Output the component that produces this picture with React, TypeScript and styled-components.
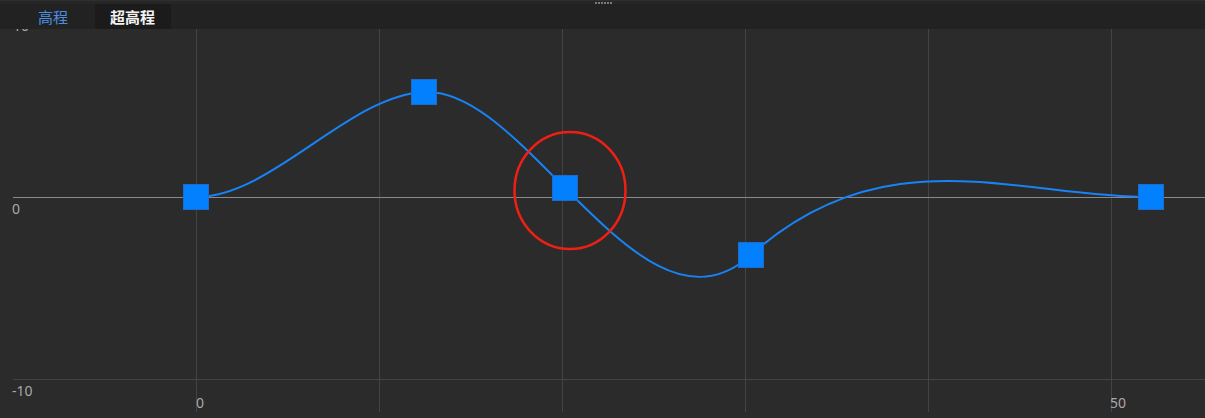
import React from "react";
import styled, { createGlobalStyle } from "styled-components";

const GlobalStyle = createGlobalStyle`
  html, body { margin: 0; padding: 0; background: #2b2b2b; }
  body { font-family: "Noto Sans CJK SC", "Noto Sans", sans-serif; }
`;

const Panel = styled.div`
  width: 1205px;
  height: 418px;
  display: flex;
  flex-direction: column;
  background: #2b2b2b;
  overflow: hidden;
`;

const TopStrip = styled.div`
  height: 4px;
  background: #262626;
  border-top: 1px solid #2f2f2f;
  box-sizing: border-box;
  display: flex;
  justify-content: center;
  align-items: flex-start;
  padding-left: 2px;
`;

const Grip = styled.div`
  display: flex;
  gap: 1px;
  margin-top: 1px;
`;

const GripDot = styled.span`
  width: 2px;
  height: 2px;
  background: #7a7a7a;
`;

const TabBar = styled.div`
  height: 25px;
  background: #222222;
  display: flex;
  align-items: stretch;
  padding-left: 20px;
`;

const Tab = styled.div<{ $active?: boolean }>`
  display: flex;
  align-items: center;
  padding: 0 ${(p) => (p.$active ? "15px" : "16px")} 0 ${(p) => (p.$active ? "18px" : "15px")};
  font-size: 15px;
  line-height: 1;
  color: ${(p) => (p.$active ? "#4b8fe2" : "#f2f2f2")};
  background: ${(p) => (p.$active ? "transparent" : "#1b1b1b")};
  font-weight: ${(p) => (p.$active ? 400 : 700)};
  margin-right: ${(p) => (p.$active ? "12px" : "0")};
`;

const ChartArea = styled.div`
  flex: 1;
  overflow: hidden;
`;

const Svg = styled.svg`
  display: block;
`;

const TOP = 29;
// x, y (page px), slope dy/dx at the point
const pts: [number, number, number][] = [
  [196, 197, 0],
  [424, 92, -0.05],
  [565, 188, 1.0],
  [751, 255, -0.9],
  [1151, 197, 0],
];

function hermitePath(p: [number, number, number][]): string {
  let d = `M${p[0][0]},${p[0][1] - TOP}`;
  for (let i = 0; i < p.length - 1; i++) {
    const [x0, y0, m0] = p[i];
    const [x1, y1, m1] = p[i + 1];
    const h = (x1 - x0) / 3;
    d += ` C${x0 + h},${y0 - TOP + m0 * h} ${x1 - h},${y1 - TOP - m1 * h} ${x1},${y1 - TOP}`;
  }
  return d;
}

const vLines = [196, 379, 562, 745, 928, 1111];
const hLines = [
  { y: 15, color: "#444" },
  { y: 197, color: "#8a8a8a" },
  { y: 379, color: "#444" },
];

export default function App() {
  const curve = hermitePath(pts);
  return (
    <>
      <GlobalStyle />
      <Panel>
        <TopStrip>
          <Grip>
            {Array.from({ length: 6 }).map((_, i) => (
              <GripDot key={i} />
            ))}
          </Grip>
        </TopStrip>
        <TabBar>
          <Tab $active>高程</Tab>
          <Tab>超高程</Tab>
        </TabBar>
        <ChartArea>
          <Svg width={1205} height={389} viewBox="0 0 1205 389">
            {vLines.map((x) => (
              <line key={x} x1={x + 0.5} x2={x + 0.5} y1={0} y2={383} stroke="#444" strokeWidth={1} />
            ))}
            {hLines.map((l) => (
              <line key={l.y} x1={13} x2={1205} y1={l.y - TOP + 0.5} y2={l.y - TOP + 0.5} stroke={l.color} strokeWidth={1} />
            ))}
            <g fontFamily="'Noto Sans', 'DejaVu Sans', sans-serif" fontSize={14} fill="#a9a9a9">
              <text x={13} y={15 - TOP + 16}>10</text>
              <text x={12} y={197 - TOP + 17}>0</text>
              <text x={12} y={379 - TOP + 17}>-10</text>
              <text x={196} y={408 - TOP}>0</text>
              <text x={1110} y={408 - TOP}>50</text>
            </g>
            <path d={curve} fill="none" stroke="#1783f5" strokeWidth={2} />
            {pts.map(([x, y]) => (
              <rect
                key={x}
                x={x - 12.5}
                y={y - TOP - 12.5}
                width={25}
                height={25}
                fill="#0380fe"
                stroke="#1d6cc9"
                strokeWidth={1}
              />
            ))}
            <ellipse cx={570} cy={190.5 - TOP} rx={55.5} ry={58.5} fill="none" stroke="#f01f14" strokeWidth={2.5} />
          </Svg>
        </ChartArea>
      </Panel>
    </>
  );
}
